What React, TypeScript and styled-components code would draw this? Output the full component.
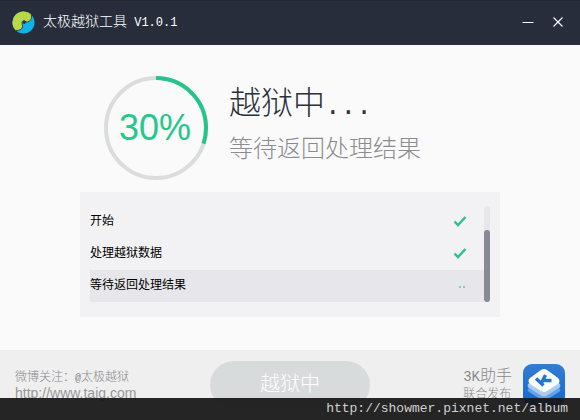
import React from "react";
import styled, { createGlobalStyle } from "styled-components";

const GlobalStyle = createGlobalStyle`
  * { box-sizing: border-box; }
  body {
    margin: 0;
    background: #fafafa;
    font-family: "Liberation Sans", "Noto Sans CJK SC", sans-serif;
    font-weight: 300;
  }
  h1, h2, p, ul { margin: 0; padding: 0; font-weight: 300; }
  button { font-family: inherit; border: 0; padding: 0; }
`;

const Window = styled.div`
  position: relative;
  min-height: 100vh;
  display: flex;
  flex-direction: column;
  background: #fafafa;
`;

const TitleBar = styled.header`
  display: flex;
  align-items: center;
  height: 45px;
  padding: 0 12px 2px;
  background: #272d3b;
  border-top: 1px solid #22262f;
  color: #fff;
`;

const AppTitle = styled.h1`
  flex: 1;
  margin-left: 8px;
  font-size: 14px;
  line-height: 20px;
`;

const Mono = styled.span<{ $size: number }>`
  font-family: "Liberation Mono", monospace;
  font-size: ${(p) => p.$size}px;
  white-space: pre;
`;

const WindowControls = styled.div`
  display: flex;
  gap: 10px;
`;

const IconButton = styled.button`
  display: grid;
  place-items: center;
  width: 20px;
  height: 20px;
  background: none;
  color: #fff;
`;

const Main = styled.main`
  flex: 1;
  padding: 31px 80px 33px;
`;

const Hero = styled.section`
  display: flex;
  gap: 21px;
  padding-left: 24px;
  margin-bottom: 12px;
`;

const Ring = styled.div`
  display: grid;
  width: 104px;
  height: 104px;
  & > * { grid-area: 1 / 1; }
`;

const Percent = styled.span`
  place-self: center;
  padding-right: 2px;
  color: #26c889;
  font-size: 36px;
  line-height: 40px;
  font-weight: 400;
`;

const Status = styled.div`
  padding-top: 5px;
  white-space: nowrap;
`;

const StatusTitle = styled.h2`
  color: #2b303b;
  font-size: 32px;
  line-height: 44px;
`;

const StatusDetail = styled.p`
  color: #8b8c90;
  font-size: 24px;
  line-height: 40px;
`;

const Panel = styled.section`
  display: flex;
  padding: 14px 10px 15px;
  background: #f2f2f4;
`;

const StepList = styled.ul`
  flex: 1;
  list-style: none;
`;

const Step = styled.li<{ $active?: boolean }>`
  display: flex;
  align-items: center;
  justify-content: space-between;
  height: 32px;
  padding: 0 17px 3px 0;
  background: ${(p) => (p.$active ? "#e7e7eb" : "transparent")};
  color: #000;
  font-size: 12px;
  line-height: 18px;
  font-weight: 400;
`;

const ScrollTrack = styled.div`
  display: flex;
  align-items: flex-end;
  width: 6px;
  border-radius: 3px;
  background: #e7e7ea;
`;

const ScrollThumb = styled.div`
  width: 100%;
  height: 75%;
  border-radius: 3px;
  background: #878a92;
`;

const Footer = styled.footer`
  display: grid;
  grid-template-columns: 1fr auto 1fr;
  align-items: start;
  height: 70px;
  padding: 11px 15px 0;
  background: #efefef;
  color: #88898c;
`;

const Contact = styled.div`
  padding-top: 8px;
  font-size: 12px;
  line-height: 16px;
`;

const SiteLink = styled.a`
  display: block;
  color: #96979a;
  font-size: 14px;
  line-height: 12px;
  font-weight: 400;
  text-decoration: none;
`;

const ActionButton = styled.button`
  width: 160px;
  height: 48px;
  border-radius: 24px;
  background: #d8dbdc;
  color: #fff;
  font-size: 20px;
  font-weight: 300;
  padding-bottom: 5px;
`;

const Partner = styled.div`
  display: flex;
  justify-content: flex-end;
  gap: 11px;
  padding-top: 3px;
`;

const PartnerText = styled.div`
  padding-top: 2px;
  font-size: 12px;
  line-height: 14px;
`;

const PartnerName = styled.p`
  font-size: 16px;
  line-height: 20px;
`;

const Watermark = styled.div`
  position: absolute;
  left: 0;
  right: 0;
  bottom: 0;
  height: 22px;
  padding-right: 12px;
  background: rgba(22, 22, 22, 0.93);
  color: #d0d0d0;
  font: 400 13px/22px "Liberation Mono", monospace;
  text-align: right;
`;

const TaijiLogo = () => (
  <svg width="23" height="23" viewBox="0 0 24 24" aria-hidden="true">
    <circle cx="12" cy="12" r="11.5" fill="#11b3e8" />
    <path
      d="M20 3.7A11.5 11.5 0 1 0 4 20.3C7.5 20.5 10.5 19.5 11 16.5C11.4 14.2 9.6 12.8 10.8 10.9C12 9.2 14.2 10 14.6 11.6C19 11.5 21.5 8 20 3.7Z"
      fill="#b9d849"
    />
    <path
      d="M4 20.3C7.5 20.5 10.5 19.5 11 16.5C11.4 14.2 9.6 12.8 10.8 10.9C12 9.2 14.2 10 14.6 11.6C19 11.5 21.5 8 20 3.7"
      fill="none"
      stroke="#272d3b"
      strokeWidth="0.9"
    />
    <circle cx="12.8" cy="12" r="1.5" fill="#272d3b" />
  </svg>
);

const Check = () => (
  <svg width="14" height="12" viewBox="0 0 14 12" role="img" aria-label="完成">
    <path d="M1.5 6.5L5 10L12.5 2" fill="none" stroke="#26c489" strokeWidth="2.4" />
  </svg>
);

const Pending = () => (
  <svg width="14" height="12" viewBox="0 0 14 12" role="img" aria-label="进行中">
    <path d="M6 8h2M10 8h2" stroke="#84d2b6" strokeWidth="2" />
  </svg>
);

const PartnerLogo = () => (
  <svg width="42" height="42" viewBox="0 0 42 42" aria-hidden="true">
    <defs>
      <linearGradient id="partner" x2="0" y2="1">
        <stop stopColor="#347bd2" />
        <stop offset="1" stopColor="#1269d0" />
      </linearGradient>
    </defs>
    <rect width="42" height="42" rx="9" fill="url(#partner)" />
    <path d="M5 25L21 15L37 25Q38 27 36 28L23 36Q21 37 19 36L6 28Q4 27 5 25Z" fill="#65a1e5" />
    <path d="M5 20L21 10L37 20Q38 23 36 24L23 32Q21 33 19 32L6 24Q4 23 5 20Z" fill="#a8cbf2" />
    <path d="M7 14L18 6Q21 4 24 6L35 14Q38 17 35 20L24 27Q21 29 18 27L7 20Q4 17 7 14Z" fill="#fff" />
    <path
      d="M13 14.5L20.5 21.5M18.5 19L22.5 11M20.5 16.5L28.5 16.5"
      fill="none"
      stroke="#2475d4"
      strokeWidth="3.4"
      strokeLinejoin="round"
    />
  </svg>
);

const progress = 30;
const radius = 50;
const circumference = 2 * Math.PI * radius;

const steps = [
  { label: "开始", done: true },
  { label: "处理越狱数据", done: true },
  { label: "等待返回处理结果", done: false },
];

export default function App() {
  return (
    <>
      <GlobalStyle />
      <Window>
        <TitleBar>
          <TaijiLogo />
          <AppTitle>
            太极越狱工具<Mono $size={12}>{" V1.0.1"}</Mono>
          </AppTitle>
          <WindowControls>
            <IconButton aria-label="最小化">
              <svg width="12" height="12" viewBox="0 0 12 12">
                <path d="M0.5 6.5h11" stroke="currentColor" />
              </svg>
            </IconButton>
            <IconButton aria-label="关闭">
              <svg width="12" height="12" viewBox="0 0 12 12">
                <path d="M1.5 1.5l9 9M10.5 1.5l-9 9" stroke="currentColor" strokeWidth="1.2" />
              </svg>
            </IconButton>
          </WindowControls>
        </TitleBar>
        <Main>
          <Hero>
            <Ring>
              <svg width="104" height="104" viewBox="0 0 104 104" aria-hidden="true">
                <circle cx="52" cy="52" r={radius} fill="none" stroke="#dadcdd" strokeWidth="4" />
                <circle
                  cx="52"
                  cy="52"
                  r={radius}
                  fill="none"
                  stroke="#26c489"
                  strokeWidth="4"
                  strokeDasharray={`${(circumference * progress) / 100} ${circumference}`}
                  transform="rotate(-90 52 52)"
                />
              </svg>
              <Percent>{progress}%</Percent>
            </Ring>
            <Status>
              <StatusTitle>
                越狱中<Mono $size={26}>...</Mono>
              </StatusTitle>
              <StatusDetail>等待返回处理结果</StatusDetail>
            </Status>
          </Hero>
          <Panel>
            <StepList>
              {steps.map((step) => (
                <Step key={step.label} $active={!step.done}>
                  {step.label}
                  {step.done ? <Check /> : <Pending />}
                </Step>
              ))}
            </StepList>
            <ScrollTrack>
              <ScrollThumb />
            </ScrollTrack>
          </Panel>
        </Main>
        <Footer>
          <Contact>
            <p>
              微博关注：<Mono $size={10}>@</Mono>太极越狱
            </p>
            <SiteLink href="http://www.taig.com">http://www.taig.com</SiteLink>
          </Contact>
          <ActionButton>越狱中</ActionButton>
          <Partner>
            <PartnerText>
              <PartnerName>
                <Mono $size={14}>3K</Mono>助手
              </PartnerName>
              <p>联合发布</p>
            </PartnerText>
            <PartnerLogo />
          </Partner>
        </Footer>
        <Watermark>http://showmer.pixnet.net/album</Watermark>
      </Window>
    </>
  );
}
